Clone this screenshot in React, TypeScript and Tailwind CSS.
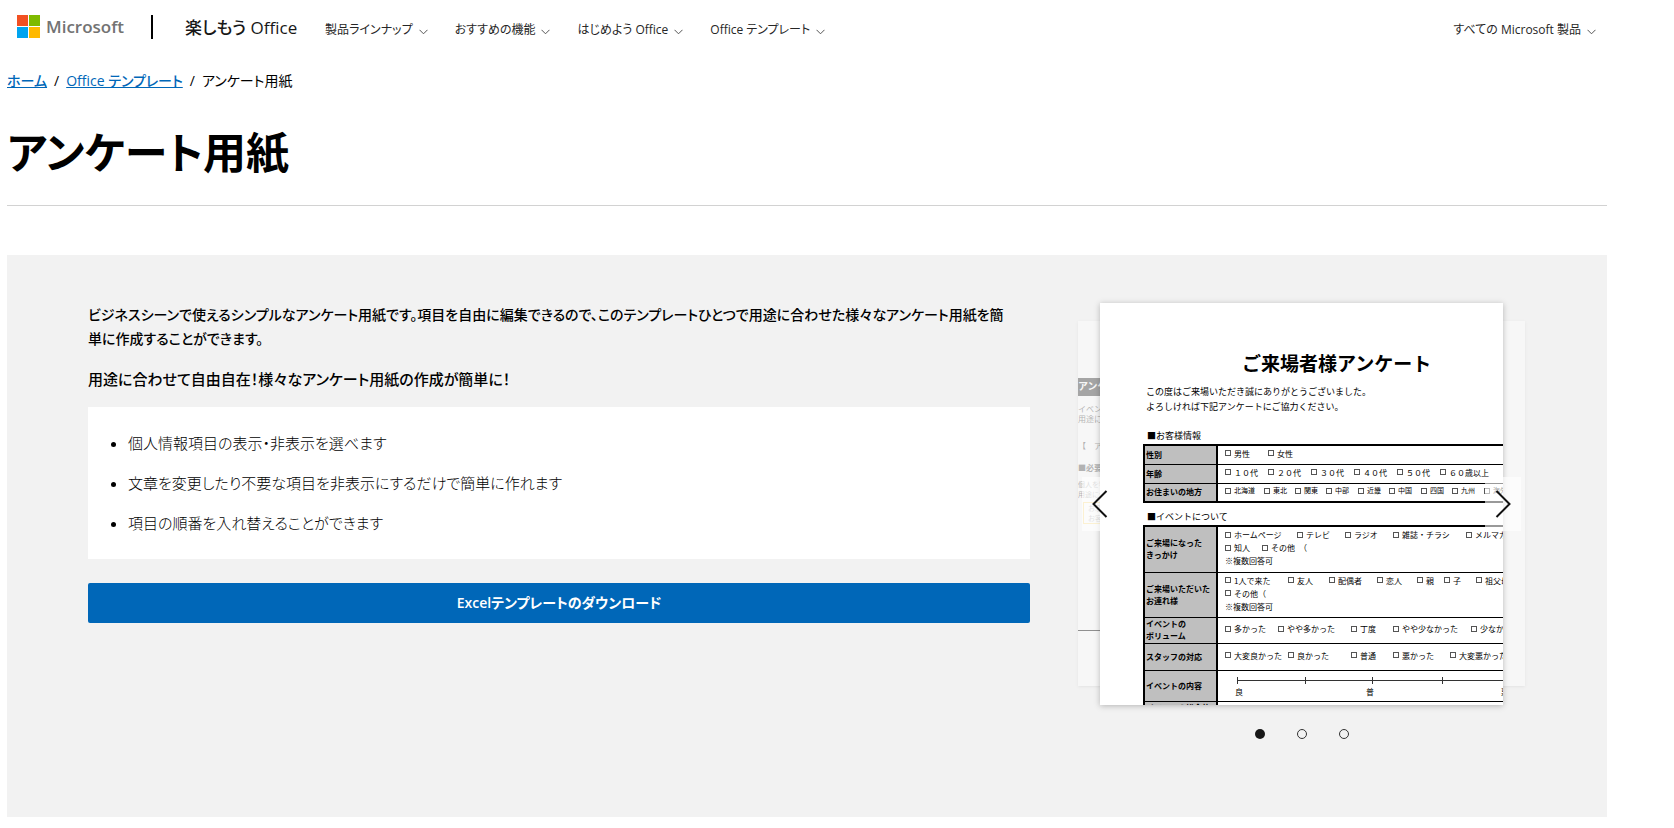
import React from "react";

type Choice = { label: string; width: string };

const navItems = ["製品ラインナップ", "おすすめの機能", "はじめよう Office", "Office テンプレート"];

const features = [
  "個人情報項目の表示・非表示を選べます",
  "文章を変更したり不要な項目を非表示にするだけで簡単に作れます",
  "項目の順番を入れ替えることができます",
];

const genders: Choice[] = [
  { label: "男性", width: "w-[43px]" },
  { label: "女性", width: "w-[43px]" },
];

const ages: Choice[] = ["１０代", "２０代", "３０代", "４０代", "５０代", "６０歳以上"].map((label) => ({
  label,
  width: "w-[43px]",
}));

const regions: Choice[] = [
  { label: "北海道", width: "w-[39px]" },
  { label: "東北", width: "w-[31px]" },
  { label: "関東", width: "w-[31px]" },
  { label: "中部", width: "w-[32px]" },
  { label: "近畿", width: "w-[31px]" },
  { label: "中国", width: "w-[32px]" },
  { label: "四国", width: "w-[31px]" },
  { label: "九州", width: "w-[32px]" },
  { label: "海外", width: "w-[40px]" },
];

const sources: Choice[] = [
  { label: "ホームページ", width: "w-[72px]" },
  { label: "テレビ", width: "w-[48px]" },
  { label: "ラジオ", width: "w-[48px]" },
  { label: "雑誌・チラシ", width: "w-[73px]" },
  { label: "メルマガ", width: "w-[60px]" },
];

const sourcesMore: Choice[] = [
  { label: "知人", width: "w-[37px]" },
  { label: "その他　（", width: "w-[60px]" },
];

const companions: Choice[] = [
  { label: "1人で来た", width: "w-[63px]" },
  { label: "友人", width: "w-[41px]" },
  { label: "配偶者", width: "w-[48px]" },
  { label: "恋人", width: "w-[40px]" },
  { label: "親", width: "w-[27px]" },
  { label: "子", width: "w-[32px]" },
  { label: "祖父母", width: "w-[48px]" },
];

const companionsMore: Choice[] = [{ label: "その他（", width: "w-[60px]" }];

const volumes: Choice[] = [
  { label: "多かった", width: "w-[53px]" },
  { label: "やや多かった", width: "w-[73px]" },
  { label: "丁度", width: "w-[42px]" },
  { label: "やや少なかった", width: "w-[78px]" },
  { label: "少なかった", width: "w-[60px]" },
];

const staff: Choice[] = [
  { label: "大変良かった", width: "w-[63px]" },
  { label: "良かった", width: "w-[63px]" },
  { label: "普通", width: "w-[42px]" },
  { label: "悪かった", width: "w-[57px]" },
  { label: "大変悪かった", width: "w-[70px]" },
];

function ChevronDown() {
  return (
    <svg viewBox="0 0 9 6" className="mt-1 h-[6px] w-[9px] shrink-0" fill="none" stroke="#555" strokeWidth="1" aria-hidden="true">
      <path d="M0.5 0.8 4.5 4.8 8.5 0.8" />
    </svg>
  );
}

function MicrosoftLogo() {
  return (
    <a href="#" className="flex items-center gap-[6px]">
      <svg viewBox="0 0 23 23" className="h-[23px] w-[23px]" aria-hidden="true">
        <path fill="#f25022" d="M0 0h11v11H0z" />
        <path fill="#7fba00" d="M12 0h11v11H12z" />
        <path fill="#00a4ef" d="M0 12h11v11H0z" />
        <path fill="#ffb900" d="M12 12h11v11H12z" />
      </svg>
      <span className="text-[17px] leading-6 font-semibold text-[#737373]">Microsoft</span>
    </a>
  );
}

function Choices({ items }: { items: Choice[] }) {
  return (
    <div className="flex whitespace-nowrap">
      {items.map((item) => (
        <span key={item.label} className={`flex shrink-0 items-center gap-[3px] ${item.width}`}>
          <span className="h-[6px] w-[6px] shrink-0 border border-[#555]" />
          {item.label}
        </span>
      ))}
    </div>
  );
}

function FormRow({ title, height, children }: { title: React.ReactNode; height: string; children?: React.ReactNode }) {
  return (
    <tr className={`border-b border-black ${height}`}>
      <th scope="row" className="w-[73px] border-r-2 border-black bg-[#bfbfbf] py-0 pr-0 pl-px text-left leading-[12px] font-bold">
        {title}
      </th>
      <td className="pb-[3px] pl-[7px] leading-[13px]">{children}</td>
    </tr>
  );
}

function SurveySheet() {
  return (
    <article className="h-[402px] w-[403px] overflow-hidden bg-white pl-[43px] font-['Noto_Sans_CJK_JP',sans-serif] text-[8px] text-black shadow-[0_1px_6px_rgba(0,0,0,0.25)] [font-feature-settings:normal]">
      <div className="w-[420px]">
        <h2 className="pt-[46px] pl-[99px] text-[19px] leading-7 font-bold">ご来場者様アンケート</h2>
        <p className="mt-[7px] pl-[3px] text-[9px] leading-[15px]">
          この度はご来場いただき誠にありがとうございました。
          <br />
          よろしければ下記アンケートにご協力ください。
        </p>
        <h3 className="mt-[14px] pl-1 text-[9px] leading-4">■お客様情報</h3>
        <table className="w-full border-collapse border-2 border-black">
          <tbody>
            <FormRow title="性別" height="h-[19px]">
              <Choices items={genders} />
            </FormRow>
            <FormRow title="年齢" height="h-[19px]">
              <Choices items={ages} />
            </FormRow>
            <FormRow title="お住まいの地方" height="h-[19px]">
              <div className="text-[7px]">
                <Choices items={regions} />
              </div>
            </FormRow>
          </tbody>
        </table>
        <h3 className="mt-[6px] pl-1 text-[9px] leading-4">■イベントについて</h3>
        <table className="w-full border-collapse border-2 border-black">
          <tbody>
            <FormRow title={<>ご来場になった<br />きっかけ</>} height="h-[46px]">
              <Choices items={sources} />
              <Choices items={sourcesMore} />
              ※複数回答可
            </FormRow>
            <FormRow title={<>ご来場いただいた<br />お連れ様</>} height="h-[45px]">
              <Choices items={companions} />
              <Choices items={companionsMore} />
              ※複数回答可
            </FormRow>
            <FormRow title={<>イベントの<br />ボリューム</>} height="h-[26px]">
              <Choices items={volumes} />
            </FormRow>
            <FormRow title="スタッフの対応" height="h-[27px]">
              <Choices items={staff} />
            </FormRow>
            <FormRow title="イベントの内容" height="h-[31px]">
              <svg viewBox="0 0 300 8" className="mt-[5px] mb-px h-2 w-[300px]" fill="none" stroke="#333" strokeWidth="1" aria-hidden="true">
                <path d="M12.5 4.5H282M12.5 1v7M80.5 1v7M147.5 1v7M217.5 1v7M282 1v7" />
              </svg>
              <div className="flex pl-[10px]">
                <span className="w-[131px]">良</span>
                <span className="w-[135px]">普</span>
                <span>悪</span>
              </div>
            </FormRow>
            <FormRow title={<>イベントの総合的<br />な満足度</>} height="h-[26px]" />
          </tbody>
        </table>
      </div>
    </article>
  );
}

function PreviousSheet() {
  return (
    <div className="absolute top-[18px] left-0 h-[365px] w-[364px] overflow-hidden bg-white font-['Noto_Sans_CJK_JP',sans-serif] text-[8px] whitespace-nowrap text-[#555] opacity-40 shadow [font-feature-settings:normal]">
      <p className="mt-[57px] h-[18px] bg-[#333] text-[10px] leading-[16px] font-bold text-white">アンケート</p>
      <p className="mt-2 leading-[10px]">
        イベント開催時の
        <br />
        用途に合わせて
      </p>
      <p className="mt-[14px] leading-[16px]">【　アンケート用紙</p>
      <p className="mt-[7px] leading-[14px] font-bold">■必要な項目</p>
      <p className="mt-1 text-[7px] leading-[10px]">
        個人を特定する項目
        <br />
        用途に合わせて
      </p>
      <p className="mt-[3px] ml-[5px] border border-[#ffc000] px-1 text-[7px] leading-[10px]">
        お名前
        <br />
        お客様
      </p>
      <hr className="mt-[106px] border-black" />
    </div>
  );
}

function Carousel() {
  return (
    <section className="w-[447px] shrink-0" aria-label="テンプレートのプレビュー">
      <div className="relative flex justify-center">
        <PreviousSheet />
        <div className="absolute top-[18px] right-0 h-[365px] w-[364px] bg-white opacity-40 shadow" />
        <div className="relative">
          <SurveySheet />
        </div>
        <button type="button" aria-label="前へ" className="absolute top-[174px] left-1 flex h-[54px] w-9 items-center justify-center bg-white/60">
          <svg viewBox="0 0 16 28" className="h-7 w-4" fill="none" stroke="#111" strokeWidth="2" aria-hidden="true">
            <path d="M14.5 1 1.5 14l13 13" />
          </svg>
        </button>
        <button type="button" aria-label="次へ" className="absolute top-[174px] right-1 flex h-[54px] w-9 items-center justify-center bg-white/60">
          <svg viewBox="0 0 16 28" className="h-7 w-4" fill="none" stroke="#111" strokeWidth="2" aria-hidden="true">
            <path d="M1.5 1l13 13-13 13" />
          </svg>
        </button>
      </div>
      <div className="mt-6 flex justify-center gap-8">
        <button type="button" aria-label="スライド 1" className="h-[10px] w-[10px] rounded-full bg-[#171717]" />
        <button type="button" aria-label="スライド 2" className="h-[10px] w-[10px] rounded-full border border-[#333]" />
        <button type="button" aria-label="スライド 3" className="h-[10px] w-[10px] rounded-full border border-[#333]" />
      </div>
    </section>
  );
}

export default function App() {
  return (
    <div className="bg-white pr-[67px] pl-[7px] font-['Open_Sans','Noto_Sans_CJK_JP',sans-serif] text-[15px] text-black [font-feature-settings:'palt']">
      <header className="flex h-[54px] items-center pr-[11px] pb-px pl-[10px]">
        <MicrosoftLogo />
        <span className="ml-[27px] h-6 w-[2px] bg-black" />
        <a href="#" className="ml-8 w-[112px] pt-[3px] text-[17px] leading-7 font-medium whitespace-nowrap text-[#171717]">
          楽しもう Office
        </a>
        <nav className="ml-7 flex gap-[27px] pt-[6px]">
          {navItems.map((label) => (
            <button key={label} type="button" className="flex items-center gap-[6px] text-[12px] leading-5 whitespace-nowrap text-[#262626]">
              {label}
              <ChevronDown />
            </button>
          ))}
        </nav>
        <button type="button" className="ml-auto flex items-center gap-[6px] pt-[6px] text-[12px] leading-5 whitespace-nowrap text-[#262626]">
          すべての Microsoft 製品
          <ChevronDown />
        </button>
      </header>

      <nav aria-label="パンくずリスト" className="mt-[15px] flex gap-[7px] text-[14px] leading-6">
        <a href="#" className="font-medium text-[#0067b8] underline">ホーム</a>
        <span>/</span>
        <a href="#" className="font-medium text-[#0067b8] underline">Office テンプレート</a>
        <span>/</span>
        <span>アンケート用紙</span>
      </nav>

      <h1 className="mt-[30px] border-b border-[#d2d2d2] pb-[22px] text-[43px] leading-[60px] font-bold">アンケート用紙</h1>

      <main className="mt-[48px] flex gap-12 border-t border-white bg-[#f2f2f2] bg-clip-padding pt-12 pr-[82px] pb-[78px] pl-[81px]">
        <div className="min-w-0 flex-1">
          <p className="pr-4 text-[14px] leading-6 font-medium">
            ビジネスシーンで使えるシンプルなアンケート用紙です。項目を自由に編集できるので、このテンプレートひとつで用途に合わせた様々なアンケート用紙を簡単に作成することができます。
          </p>
          <p className="mt-4 leading-6 font-medium">用途に合わせて自由自在！様々なアンケート用紙の作成が簡単に！</p>
          <ul className="mt-4 list-disc space-y-4 bg-white py-6 pl-10 leading-6 font-light">
            {features.map((feature) => (
              <li key={feature}>{feature}</li>
            ))}
          </ul>
          <a href="#" className="mt-6 block rounded-[2px] bg-[#0067b8] text-center text-[14px] leading-10 font-semibold text-white">
            Excelテンプレートのダウンロード
          </a>
        </div>
        <Carousel />
      </main>
    </div>
  );
}
